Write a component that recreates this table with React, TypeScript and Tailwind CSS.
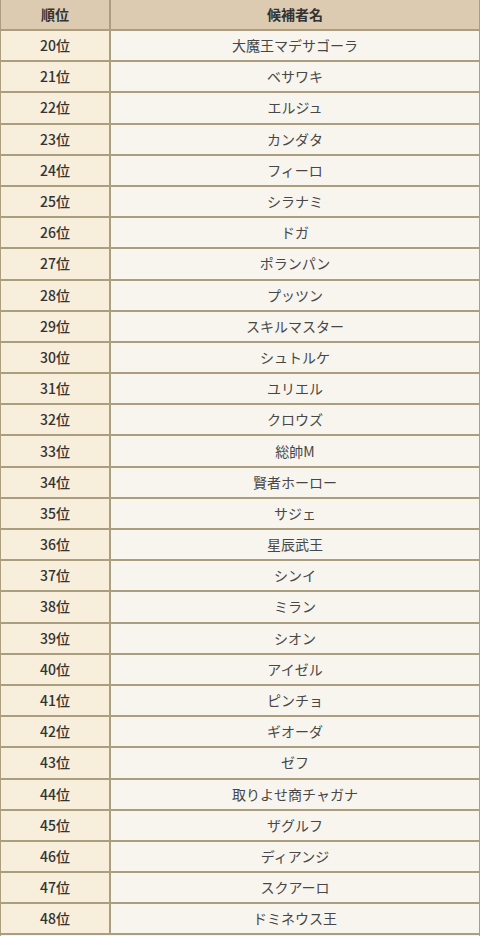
import React from "react";

const names = [
  "大魔王マデサゴーラ",
  "ベサワキ",
  "エルジュ",
  "カンダタ",
  "フィーロ",
  "シラナミ",
  "ドガ",
  "ポランパン",
  "プッツン",
  "スキルマスター",
  "シュトルケ",
  "ユリエル",
  "クロウズ",
  "総帥M",
  "賢者ホーロー",
  "サジェ",
  "星辰武王",
  "シンイ",
  "ミラン",
  "シオン",
  "アイゼル",
  "ピンチョ",
  "ギオーダ",
  "ゼフ",
  "取りよせ商チャガナ",
  "ザグルフ",
  "ディアンジ",
  "スクアーロ",
  "ドミネウス王",
];

export default function App() {
  return (
    <div
      className="w-[480px] h-[936px] overflow-hidden bg-[#f8f5ef] text-[#333333] text-[14px] border-x border-[#aa9e7e]"
      style={{ fontFamily: '"Noto Sans CJK JP", "Noto Sans", sans-serif' }}
    >
      <div className="flex h-[31px] bg-[#dccbb0] border-b-2 border-[#aa9e7e] font-bold">
        <div className="w-[110px] shrink-0 flex items-center justify-center border-r-2 border-[#aa9e7e]">
          順位
        </div>
        <div className="flex-1 flex items-center justify-center">候補者名</div>
      </div>
      {names.map((name, i) => (
        <div key={name} className="flex h-[31.2px] border-b-2 border-[#aa9e7e]">
          <div className="w-[110px] shrink-0 flex items-center justify-center bg-[#f7eedb] border-r-2 border-[#aa9e7e] font-medium">
            {i + 20}位
          </div>
          <div className="flex-1 flex items-center justify-center bg-[#f8f5ef] text-[#474747]">{name}</div>
        </div>
      ))}
    </div>
  );
}
